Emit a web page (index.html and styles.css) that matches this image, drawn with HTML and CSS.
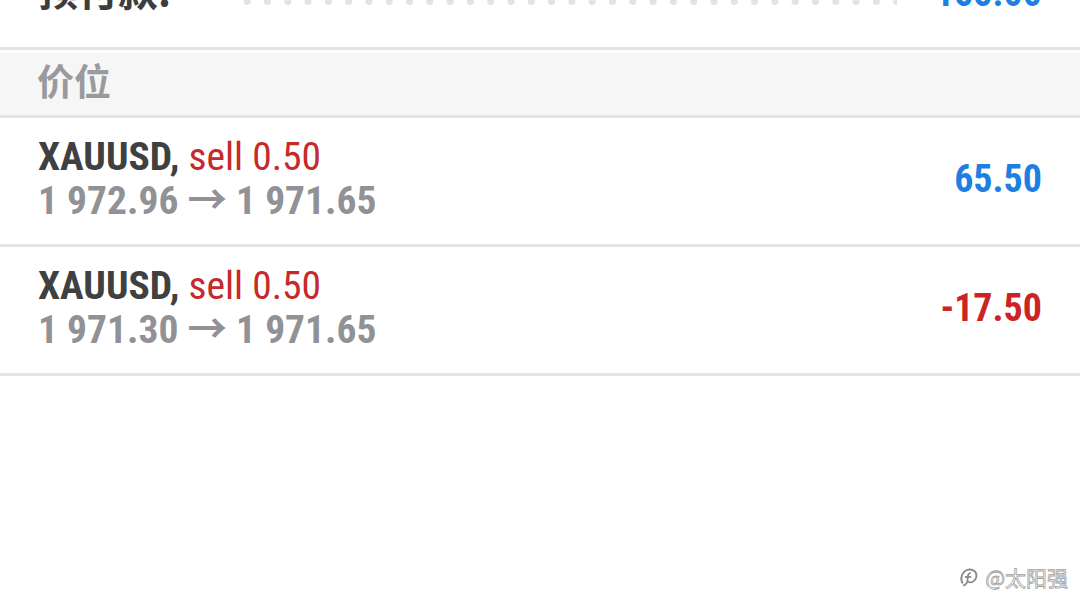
FILE: index.html
```html
<!DOCTYPE html>
<html lang="zh">
<head>
<meta charset="utf-8">
<link rel="stylesheet" href="styles.css">
</head>
<body>
<div class="page">
  <div class="summary">
    <span class="sum-label">预付款:</span>
    <span class="leader"></span>
    <span class="sum-value">155.00</span>
  </div>
  <div class="section">价位</div>
  <div class="row">
    <div class="info">
      <div class="line1"><span class="sym">XAUUSD,</span> <span class="side">sell 0.50</span></div>
      <div class="line2">1 972.96 → 1 971.65</div>
    </div>
    <div class="profit pos">65.50</div>
  </div>
  <div class="row">
    <div class="info">
      <div class="line1"><span class="sym">XAUUSD,</span> <span class="side">sell 0.50</span></div>
      <div class="line2">1 971.30 → 1 971.65</div>
    </div>
    <div class="profit neg">-17.50</div>
  </div>
  <div class="watermark">
    <svg class="wm-logo" viewBox="0 0 24 24">
      <path d="M5 19 C2 14 4 6 11 4 C17 3 21 7 20 12 C19 17 14 19 11 17" fill="none" stroke="#8c8c8c" stroke-width="2"/>
      <path d="M14 7.5 C10.5 7.5 10.5 11 10.5 14 C10.5 17.5 9 20.5 5.5 21.5" fill="none" stroke="#8c8c8c" stroke-width="2"/>
      <path d="M7.5 12 H14.5" fill="none" stroke="#8c8c8c" stroke-width="2"/>
    </svg>
    <span class="wm-text">@太阳强</span>
  </div>
</div>
</body>
</html>
```
FILE: styles.css
```css
html, body {
  margin: 0;
  padding: 0;
  background: #ffffff;
}
.page {
  position: relative;
  width: 1080px;
  height: 613px;
  overflow: hidden;
  font-family: "Roboto Condensed", "Roboto", "Noto Sans CJK SC", sans-serif;
}
.summary {
  display: flex;
  align-items: baseline;
  height: 126px;
  margin-top: -76px;
  padding: 43px 38px 0 38px;
  box-sizing: border-box;
  border-bottom: 3px solid #e4e4e4;
  line-height: 44px;
}
.sum-label {
  font-size: 40px;
  font-weight: 700;
  color: #3d3d3d;
  font-family: "Noto Sans CJK SC", sans-serif;
}
.leader {
  flex: 1;
  display: inline-block;
  height: 9px;
  margin: 0 38px 0 66px;
  background-image: radial-gradient(circle, #e3e3e3 3.2px, rgba(255,255,255,0) 4px);
  background-size: 20.3px 9px;
  background-repeat: repeat-x;
}
.sum-value {
  font-size: 38px;
  font-weight: 700;
  color: #1e7fe3;
}
.section {
  height: 62px;
  margin-top: 3px;
  background: #f6f6f6;
  border-bottom: 3px solid #e4e4e4;
  padding-left: 37px;
  font-family: "Noto Sans CJK SC", sans-serif;
  font-size: 37px;
  font-weight: 700;
  line-height: 54px;
  color: #9a9a9e;
}
.row {
  display: flex;
  align-items: center;
  justify-content: space-between;
  height: 126px;
  padding: 0 38px;
  border-bottom: 3px solid #e4e4e4;
}
.info {
  line-height: 44px;
  font-size: 39.5px;
  margin-top: -4px;
}
.sym {
  font-weight: 700;
  color: #404040;
}
.side {
  color: #c62a2a;
}
.line2 {
  font-weight: 700;
  color: #919196;
}
.profit {
  font-size: 38px;
  font-weight: 700;
  margin-top: -4px;
}
.pos { color: #1e7fe3; }
.neg { color: #cc2424; }
.watermark {
  position: absolute;
  right: 12px;
  top: 562px;
  display: flex;
  align-items: center;
  gap: 5px;
}
.wm-logo {
  width: 22px;
  height: 24px;
}
.wm-text {
  font-family: "Noto Sans CJK SC", sans-serif;
  font-size: 21px;
  color: #ffffff;
  -webkit-text-stroke: 0.8px #a0a0a0;
}
```
